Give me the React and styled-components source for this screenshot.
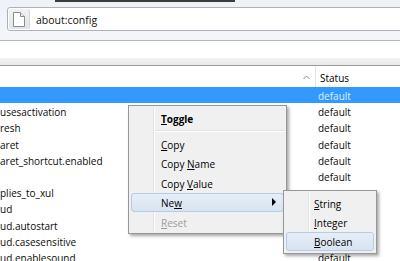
import React from "react";
import styled, { createGlobalStyle } from "styled-components";

const GlobalStyle = createGlobalStyle`
	html, body {
		margin: 0;
		padding: 0;
		background: #ffffff;
	}
	body {
		width: 400px;
		height: 261px;
		overflow: hidden;
		font-family: "Open Sans", "Noto Sans", sans-serif;
		color: #000;
	}
`;

const Page = styled.div`
	position: relative;
	width: 400px;
	height: 261px;
	overflow: hidden;
`;

const Toolbar = styled.div`
	height: 40px;
	background: linear-gradient(#eef2f7, #f4f6f9);
	border-bottom: 1px solid #b4b8bd;
	display: flex;
	flex-direction: column;
`;

const TabEdge = styled.div`
	margin-left: 55px;
	width: 180px;
	height: 2px;
	background: #3c3c3c;
`;

const UrlBar = styled.div`
	margin: 5px 0 0 7px;
	height: 22px;
	width: 420px;
	border: 1px solid #aab3bd;
	border-radius: 3px;
	background: #fff;
	display: flex;
	align-items: center;
`;

const Identity = styled.div`
	width: 20px;
	height: 20px;
	margin-left: 1px;
	border-radius: 2px;
	background: linear-gradient(#f2f2f2, #e2e4e6);
	border-right: 1px solid #d4d7da;
	display: flex;
	align-items: center;
	justify-content: center;
`;

const UrlText = styled.span`
	margin-left: 6px;
	padding-top: 1px;
	font-size: 10.5px;
	color: #111;
`;

const FindBar = styled.div`
	height: 17px;
	background: #fff;
`;

const FindBottom = styled.div`
	height: 7px;
	background: linear-gradient(#f3f3f3, #e9e9e9);
	border-bottom: 1px solid #9a9a9a;
`;

const Tree = styled.div`
	display: flex;
	flex-direction: column;
`;

const Header = styled.div`
	height: 21px;
	display: grid;
	grid-template-columns: 315px 1fr;
	background: #fff;
	font-size: 10px;
`;

const HeaderCell = styled.div`
	display: flex;
	align-items: center;
	justify-content: ${(p) => (p.$end ? "flex-end" : "flex-start")};
	padding: ${(p) => (p.$end ? "2px 5px 0 0" : "3px 0 0 4px")};
	border-left: ${(p) => (p.$end ? "none" : "1px solid #e3e3e3")};
`;

const Row = styled.div`
	height: 16.2px;
	display: grid;
	grid-template-columns: 318px 1fr;
	align-items: center;
	font-size: 10px;
	line-height: 16px;
	background: ${(p) => (p.$selected ? "#3399ff" : "transparent")};
	color: ${(p) => (p.$selected ? "#dcefff" : "#0a0a0a")};
	white-space: nowrap;
`;

const Cell = styled.div`
	overflow: hidden;
	padding-top: 2px;
`;

const Menu = styled.div`
	position: absolute;
	left: ${(p) => p.$left}px;
	top: ${(p) => p.$top}px;
	width: ${(p) => p.$width}px;
	box-sizing: border-box;
	padding: 2px 0;
	border: 1px solid #979797;
	background: #f0f0f0;
	box-shadow: 2px 2px 3px rgba(0, 0, 0, 0.35);
	font-size: 10px;

	&::before {
		content: "";
		position: absolute;
		top: 2px;
		bottom: 2px;
		left: 24px;
		width: 1px;
		background: #e2e3e3;
		box-shadow: 1px 0 0 #ffffff;
	}
`;

const Item = styled.div`
	position: relative;
	height: 19.4px;
	margin: 0 2px;
	box-sizing: border-box;
	display: flex;
	align-items: center;
	padding-left: ${(p) => p.$indent}px;
	padding-top: 2px;
	font-weight: ${(p) => (p.$bold ? 700 : 400)};
	color: ${(p) => (p.$disabled ? "#9d9d9d" : "#000")};
	border: 1px solid ${(p) => (p.$hover ? "#b3cde6" : "transparent")};
	border-radius: 3px;
	background: ${(p) =>
		p.$hover ? "linear-gradient(#e6eef7, #d7e4f1)" : "transparent"};
`;

const Key = styled.span`
	text-decoration: underline;
	text-underline-offset: 1px;
`;

const Separator = styled.div`
	height: 7px;
	margin-left: 26px;
	margin-right: 2px;
	display: flex;
	align-items: center;

	&::after {
		content: "";
		flex: 1;
		height: 1px;
		background: #e0e0e0;
		box-shadow: 0 1px 0 #ffffff;
	}
`;

const Arrow = styled.span`
	position: absolute;
	right: 7px;
	top: 50%;
	margin-top: -4px;
	width: 0;
	height: 0;
	border-top: 4px solid transparent;
	border-bottom: 4px solid transparent;
	border-left: 4px solid #000;
`;

function PageIcon() {
	return (
		<svg width="12" height="15" viewBox="0 0 12 15">
			<path
				d="M0.5 0.5 H7.5 L11.5 4.5 V14.5 H0.5 Z"
				fill="#fff"
				stroke="#8c8c8c"
			/>
			<path d="M7.5 0.5 V4.5 H11.5" fill="#ececec" stroke="#8c8c8c" />
		</svg>
	);
}

function SortArrow() {
	return (
		<svg width="7" height="5" viewBox="0 0 7 5">
			<path d="M0.5 4 L3.5 1 L6.5 4" fill="none" stroke="#8a8a8a" />
		</svg>
	);
}

// rows hidden under the submenu keep an empty status cell
const rows = [
	{ name: "", status: "default", selected: true },
	{ name: "usesactivation", status: "default" },
	{ name: "resh", status: "default" },
	{ name: "aret", status: "default" },
	{ name: "aret_shortcut.enabled", status: "default" },
	{ name: "", status: "default" },
	{ name: "plies_to_xul", status: "" },
	{ name: "ud", status: "" },
	{ name: "ud.autostart", status: "" },
	{ name: "ud.casesensitive", status: "" },
	{ name: "ud.enablesound", status: "default" },
];

function Label({ text, k }) {
	let i = text.indexOf(k);
	return (
		<span>
			{text.slice(0, i)}
			<Key>{k}</Key>
			{text.slice(i + k.length)}
		</span>
	);
}

export default function App() {
	return (
		<Page>
			<GlobalStyle />
			<Toolbar>
				<TabEdge />
				<UrlBar>
					<Identity>
						<PageIcon />
					</Identity>
					<UrlText>about:config</UrlText>
				</UrlBar>
			</Toolbar>
			<FindBar />
			<FindBottom />
			<Tree>
				<Header>
					<HeaderCell $end>
						<SortArrow />
					</HeaderCell>
					<HeaderCell>Status</HeaderCell>
				</Header>
				{rows.map((r, i) => (
					<Row key={i} $selected={r.selected}>
						<Cell>{r.name}</Cell>
						<Cell>{r.status}</Cell>
					</Row>
				))}
			</Tree>

			<Menu $left={128} $top={105} $width={159}>
				<Item $indent={29} $bold>
					<Label text="Toggle" k="T" />
				</Item>
				<Separator />
				<Item $indent={29}>
					<Label text="Copy" k="C" />
				</Item>
				<Item $indent={29}>
					<Label text="Copy Name" k="N" />
				</Item>
				<Item $indent={29}>
					<Label text="Copy Value" k="V" />
				</Item>
				<Item $indent={29} $hover>
					<Label text="New" k="w" />
					<Arrow />
				</Item>
				<Item $indent={29} $disabled>
					<Label text="Reset" k="R" />
				</Item>
			</Menu>

			<Menu $left={283} $top={190} $width={94}>
				<Item $indent={27}>
					<Label text="String" k="S" />
				</Item>
				<Item $indent={27}>
					<Label text="Integer" k="I" />
				</Item>
				<Item $indent={27} $hover>
					<Label text="Boolean" k="B" />
				</Item>
			</Menu>
		</Page>
	);
}
